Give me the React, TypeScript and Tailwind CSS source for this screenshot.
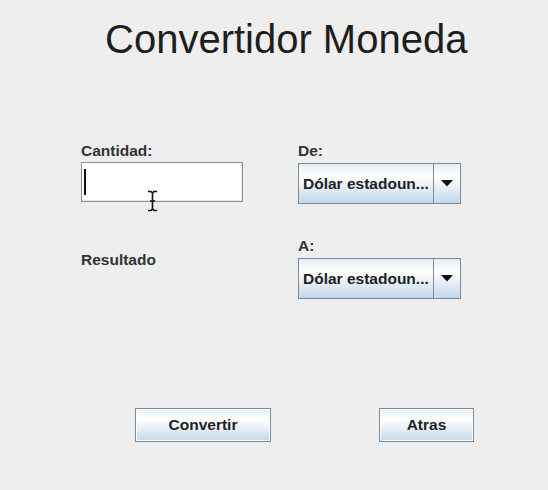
import React from "react";

const grad =
  "bg-[linear-gradient(to_bottom,#e3ecf5_0%,#ffffff_30%,#f4f8fb_45%,#c4d7ea_100%)]";

function Combo() {
  return (
    <div className="flex h-[41px] w-[163px] border border-[#7a8a99] shadow-[inset_1px_1px_0_#ffffff]">
      <div className={`flex flex-1 items-center pl-[4px] ${grad} text-[15.5px] font-bold text-[#222]`}>
        Dólar estadoun...
      </div>
      <div className={`flex w-[27px] items-center justify-center border-l border-[#7a8a99] ${grad}`}>
        <svg width="12" height="7" viewBox="0 0 12 7">
          <polygon points="0,0 12,0 6,6.5" fill="#111" />
        </svg>
      </div>
    </div>
  );
}

function Btn({ w, children }: { w: string; children: React.ReactNode }) {
  return (
    <div
      className={`flex h-[34px] ${w} items-center justify-center border border-[#7a8a99] shadow-[inset_1px_1px_0_#ffffff,inset_-1px_-1px_0_#ffffff] ${grad} text-[15.5px] font-bold text-[#222]`}
    >
      {children}
    </div>
  );
}

export default function App() {
  return (
    <div className="relative h-[490px] w-[548px] overflow-hidden bg-[#eeeeee] font-['Liberation_Sans',Arial,sans-serif]">
      <h1 className="pl-[105px] pt-[16px] text-[40px] leading-[46px] text-[#1e1e1e]">
        Convertidor Moneda
      </h1>
      <div className="mt-[80px] flex h-[266px] pl-[81px]">
        <div className="flex w-[162px] flex-col">
          <div className="text-[15.5px] font-bold leading-[18px] text-[#333]">Cantidad:</div>
          <div className="relative mt-[2px] h-[40px] w-[162px] border border-[#8393a2] bg-white shadow-[inset_-1px_-1px_0_#dfe6ee]">
            <div className="ml-[2px] mt-[6px] h-[26px] w-[2px] bg-[#111]" />
          </div>
          <div className="mt-[49px] text-[15.5px] font-bold leading-[18px] text-[#333]">Resultado</div>
        </div>
        <div className="ml-[55px] flex flex-col">
          <div className="text-[15.5px] font-bold leading-[18px] text-[#333]">De:</div>
          <div className="mt-[3px]">
            <Combo />
          </div>
          <div className="mt-[33px] text-[15.5px] font-bold leading-[18px] text-[#333]">A:</div>
          <div className="mt-[3px]">
            <Combo />
          </div>
        </div>
      </div>
      <div className="flex pl-[135px]">
        <Btn w="w-[136px]">Convertir</Btn>
        <div className="ml-[108px]">
          <Btn w="w-[95px]">Atras</Btn>
        </div>
      </div>
      <svg
        className="absolute left-[147px] top-[190px]"
        width="11"
        height="22"
        viewBox="0 0 11 22"
      >
        <path
          d="M1 1.5 H4 L5.5 3 L7 1.5 H10 M5.5 3 V19 M1 20.5 H4 L5.5 19 L7 20.5 H10 M3 11 H8"
          stroke="#111"
          strokeWidth="1.6"
          fill="none"
        />
      </svg>
    </div>
  );
}
